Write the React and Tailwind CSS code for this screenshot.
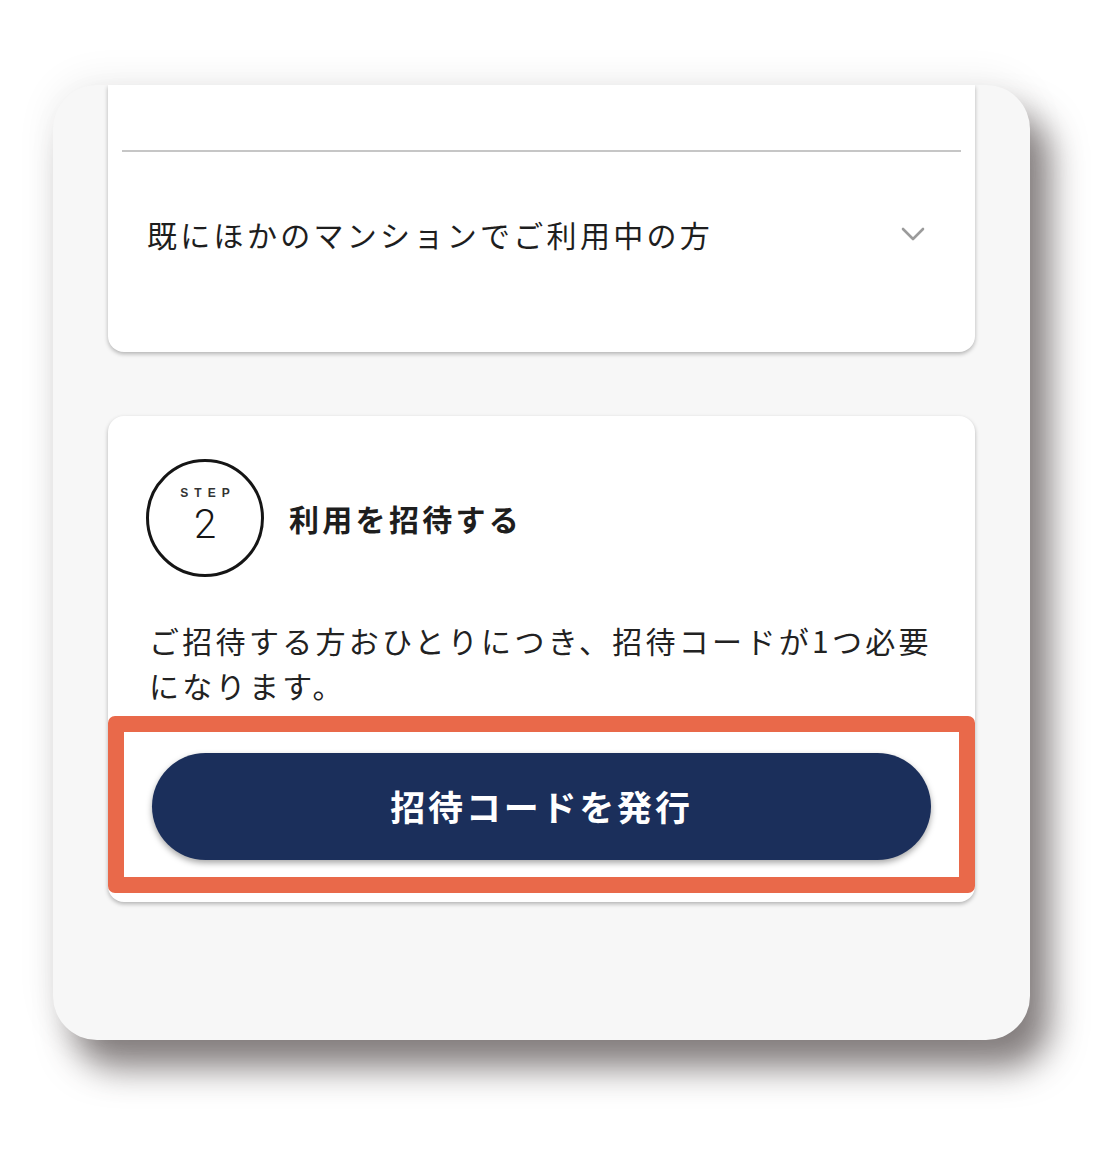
const JP = { fontFamily: '"Noto Sans CJK JP", "Noto Sans", sans-serif' };

function Chevron() {
  return (
    <svg width="24" height="15" viewBox="0 0 24 15" fill="none">
      <polyline
        points="2,2 12,12 22,2"
        stroke="#9b9b9b"
        strokeWidth="2.6"
        strokeLinecap="round"
        strokeLinejoin="round"
      />
    </svg>
  );
}

function StepBadge({ n }) {
  return (
    <div className="flex h-[118px] w-[118px] shrink-0 flex-col items-center justify-center rounded-full border-[3px] border-[#151515] pb-[4px]">
      <span
        className="pl-[0.5em] text-[12px] font-bold leading-[14px] tracking-[0.5em] text-[#333]"
        style={{ fontFamily: '"Liberation Sans", Arial, sans-serif' }}
      >
        STEP
      </span>
      <span
        className="mt-[3px] text-[40px] font-light leading-[44px] text-[#151515]"
        style={{ fontFamily: 'Roboto, "Noto Sans", sans-serif' }}
      >
        {n}
      </span>
    </div>
  );
}

export default function App() {
  return (
    <div className="min-h-[1149px] bg-white pl-[53px] pt-[85px]" style={JP}>
      <div className="h-[955px] w-[977px] overflow-hidden rounded-[44px] bg-[#f7f7f7] px-[55px] shadow-[20px_28px_34px_rgba(60,50,50,0.62),0_-4px_40px_rgba(0,0,0,0.07)]">
        {/* accordion card, scrolled so its top sits above the frame */}
        <div className="rounded-b-[16px] bg-white shadow-[0_2px_4px_rgba(0,0,0,0.28)]">
          <div className="h-[65px]" />
          <div className="mx-[14px] h-[2px] bg-[#c6c6c6]" />
          <button className="flex w-full items-center justify-between pl-[39px] pr-[50px] pt-[60px] pb-[95px] text-left">
            <span className="text-[30px] leading-[45px] tracking-[0.11em] text-[#1e1e1e]">
              既にほかのマンションでご利用中の方
            </span>
            <Chevron />
          </button>
        </div>

        {/* step 2 */}
        <div className="mt-[64px] rounded-[16px] bg-white pb-[9px] shadow-[0_2px_4px_rgba(0,0,0,0.28)]">
          <div className="flex items-center gap-[25px] pl-[38px] pt-[43px]">
            <StepBadge n="2" />
            <h2 className="text-[30px] font-bold leading-[40px] tracking-[0.11em] text-[#1e1e1e]">
              利用を招待する
            </h2>
          </div>
          <p className="mt-[41px] pl-[41px] pr-[30px] text-[30px] leading-[45px] tracking-[0.11em] text-[#222]">
            ご招待する方おひとりにつき、招待コードが1つ必要になります。
          </p>
          <div className="mt-[8px] rounded-[7px] border-[16px] border-[#e9694a] px-[28px] pt-[21px] pb-[17px]">
            <button className="flex h-[107px] w-full items-center justify-center rounded-full bg-[#1b2f5b] shadow-[0_3px_6px_rgba(0,0,0,0.35)]">
              <span className="text-[35px] font-bold tracking-[0.08em] text-white">
                招待コードを発行
              </span>
            </button>
          </div>
        </div>
      </div>
    </div>
  );
}
